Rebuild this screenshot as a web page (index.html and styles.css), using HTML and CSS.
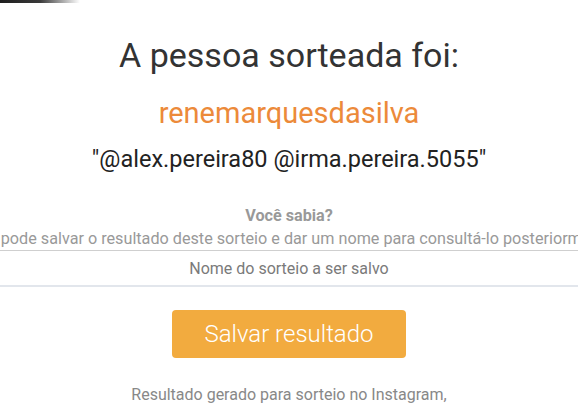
FILE: index.html
```html
<!DOCTYPE html>
<html lang="pt-BR">

<head>
    <meta charset="UTF-8">
    <meta name="viewport" content="width=device-width, initial-scale=1.0">
    <title>Resultado do sorteio</title>
    <link rel="stylesheet" href="styles.css">
</head>

<body>
    <!-- sombra do topo -->
    <div class="top-shadow"></div>

    <div class="result">
        <h1 class="result-title">A pessoa sorteada foi:</h1>
        <p class="winner">renemarquesdasilva</p>
        <p class="comment">"@alex.pereira80 @irma.pereira.5055"</p>

        <!-- dica -->
        <div class="tip">
            <p class="tip-title">Você sabia?</p>
            <p class="tip-text">Você pode salvar o resultado deste sorteio e dar um nome para consultá-lo posteriormente.</p>
        </div>

        <input class="save-name" type="text" placeholder="Nome do sorteio a ser salvo">

        <button class="save-btn" type="button">Salvar resultado</button>

        <p class="footer-note">Resultado gerado para sorteio no Instagram,</p>
    </div>
</body>

</html>
```

FILE: styles.css
```css
* {
    margin: 0;
    padding: 0;
    box-sizing: border-box;
}

body {
    background-color: #fff;
    font-family: Roboto, "Liberation Sans", Arial, sans-serif;
    overflow: hidden;
}

/* sombra escura no canto */
.top-shadow {
    width: 80px;
    height: 3px;
    background: linear-gradient(to right, #1e1e1e 0%, #3a3a3a 50%, rgba(255, 255, 255, 0) 100%);
}

.result {
    display: flex;
    flex-direction: column;
    align-items: center;
}

.result-title {
    margin-top: 32px;
    font-size: 34px;
    font-weight: 400;
    color: #333;
    line-height: 40px;
}

.winner {
    margin-top: 22px;
    font-size: 29px;
    color: #ec8a3a;
    line-height: 32px;
}

.comment {
    margin-top: 16px;
    font-size: 23.5px;
    color: #222;
    line-height: 28px;
}

/* dica */
.tip {
    margin-top: 31px;
    width: 100%;
    display: flex;
    flex-direction: column;
    align-items: center;
    color: #999;
    font-size: 16.2px;
    line-height: 23px;
}

.tip-title {
    font-weight: 700;
}

.tip-text {
    white-space: nowrap;
}

.save-name {
    width: 100%;
    height: 37px;
    margin-top: 0;
    border: none;
    border-top: 1px solid #cfcfcf;
    border-bottom: 2px solid #e2e6ec;
    background: transparent;
    text-align: center;
    font-family: inherit;
    font-size: 16px;
    outline: none;
}

.save-name::placeholder {
    color: #7a7a7a;
}

.save-btn {
    margin-top: 23px;
    width: 234px;
    height: 48px;
    border: none;
    border-radius: 4px;
    background-color: #f2ab3f;
    color: #fff;
    font-family: inherit;
    font-size: 24px;
    font-weight: 300;
}

.footer-note {
    margin-top: 27px;
    font-size: 16px;
    color: #888;
    line-height: 20px;
}
```
